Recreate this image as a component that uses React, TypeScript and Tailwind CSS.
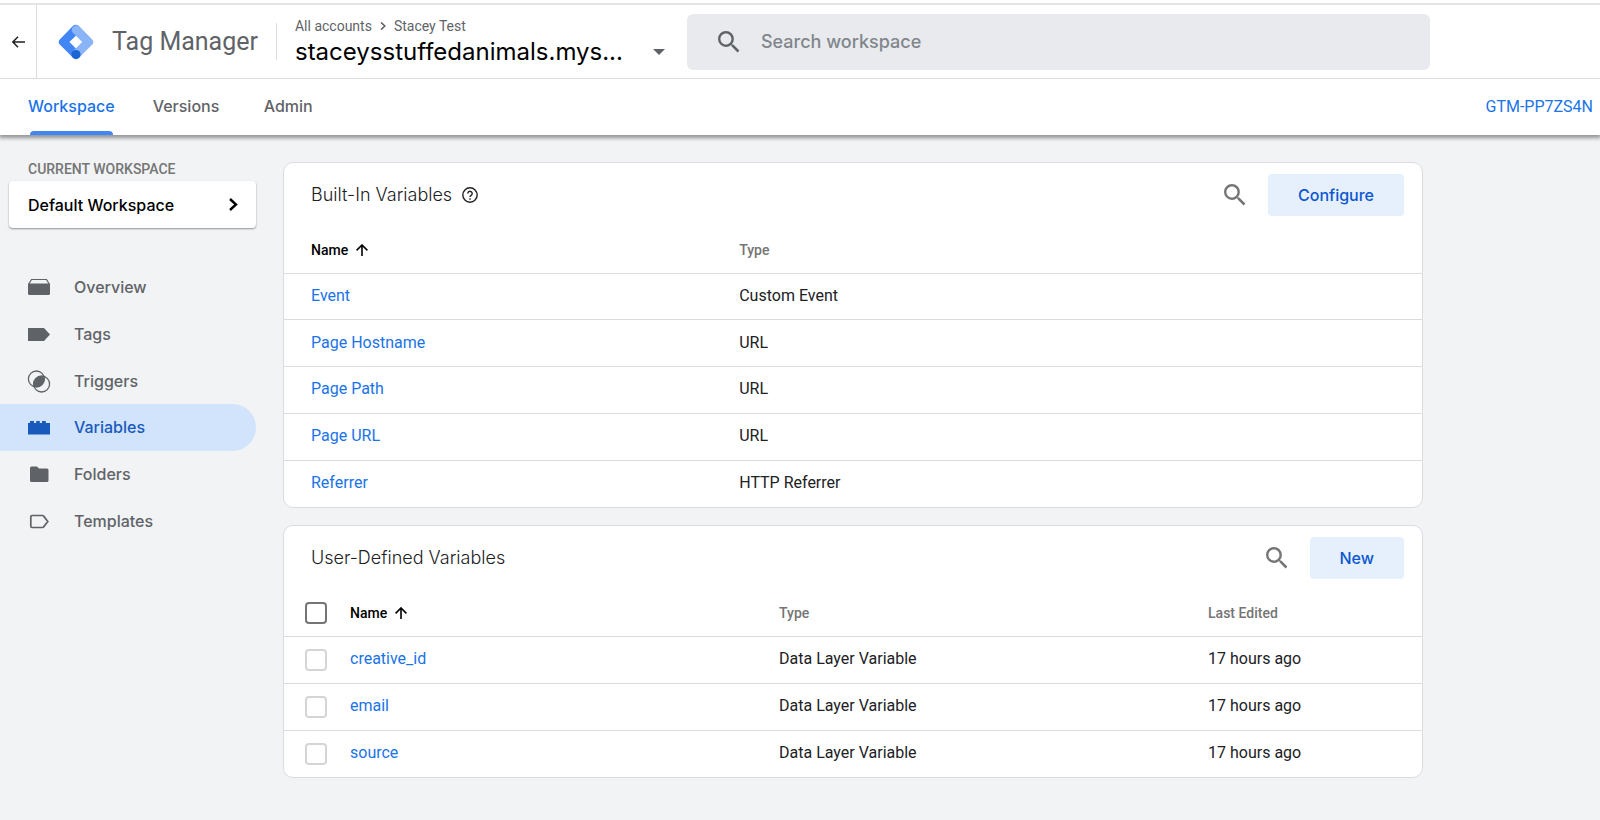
import React, { useState } from 'react';

interface BuiltInVariable {
  name: string;
  type: string;
}

interface UserVariable {
  name: string;
  type: string;
  edited: string;
}

const builtIn: BuiltInVariable[] = [
  { name: 'Event', type: 'Custom Event' },
  { name: 'Page Hostname', type: 'URL' },
  { name: 'Page Path', type: 'URL' },
  { name: 'Page URL', type: 'URL' },
  { name: 'Referrer', type: 'HTTP Referrer' },
];

const userDefined: UserVariable[] = [
  { name: 'creative_id', type: 'Data Layer Variable', edited: '17 hours ago' },
  { name: 'email', type: 'Data Layer Variable', edited: '17 hours ago' },
  { name: 'source', type: 'Data Layer Variable', edited: '17 hours ago' },
];

const tabs = ['Workspace', 'Versions', 'Admin'];

const SearchIcon = ({ className }: { className: string }) => (
  <svg className={className} viewBox="3 3 18 18" fill="currentColor" aria-hidden="true">
    <path d="M15.5 14h-.79l-.28-.27A6.471 6.471 0 0 0 16 9.5 6.5 6.5 0 1 0 9.5 16c1.61 0 3.09-.59 4.23-1.57l.27.28v.79l5 4.99L20.49 19l-4.99-5zm-6 0C7.01 14 5 11.99 5 9.5S7.01 5 9.5 5 14 7.01 14 9.5 11.99 14 9.5 14z" />
  </svg>
);

const SortArrow = () => (
  <svg className="h-3 w-3" viewBox="0 0 12 12" fill="none" stroke="currentColor" strokeWidth="1.6" aria-hidden="true">
    <path d="M6 12V1M0.6 6.4 6 1l5.4 5.4" />
  </svg>
);

const Logo = () => (
  <svg className="h-9 w-9 shrink-0" viewBox="0 0 36 36" aria-hidden="true">
    <path d="M14.6 2.2a4.6 4.6 0 0 1 6.6.1l-.2 6.5-9.6 9.2 9.6 9.4-6.4 5.9L2 20.8a4 4 0 0 1 0-5.6z" fill="#4285f4" />
    <path d="M21.3 2.3 34 15.2a4 4 0 0 1 0 5.6L21.3 33.5l-6.4-6.3 9.3-9.2-9.4-9.3a4.6 4.6 0 0 1 6.5-6.4z" fill="#8ab4f8" />
    <circle cx="18" cy="30.6" r="4.6" fill="#1967d2" />
  </svg>
);

const navItems = [
  {
    label: 'Overview',
    icon: (
      <>
        <path d="M1 5.5h22v10A1.5 1.5 0 0 1 21.5 17h-19A1.5 1.5 0 0 1 1 15.5z" fill="currentColor" />
        <path d="M1.8 6 4.5 1.5h15L22.2 6" fill="none" stroke="currentColor" strokeWidth="1.2" />
      </>
    ),
  },
  {
    label: 'Tags',
    icon: <path d="M1 3h16l6 6.5-6 6.5H1z" fill="currentColor" />,
  },
  {
    label: 'Triggers',
    icon: (
      <>
        <circle cx="9.4" cy="7" r="8" fill="none" stroke="currentColor" strokeWidth="1.3" />
        <circle cx="14.6" cy="12" r="8" fill="none" stroke="currentColor" strokeWidth="1.3" />
        <path d="M17.1 4.5a8 8 0 0 1-10.2 10A8 8 0 0 1 17.1 4.5z" fill="currentColor" />
      </>
    ),
  },
  {
    label: 'Variables',
    icon: <path d="M1 5h2V3h4v2h2.2V3h3.6v2H15V3h3.8v2H23v11.5H1z" fill="currentColor" />,
  },
  {
    label: 'Folders',
    icon: (
      <path d="M4.5 1.5H10l2 2h8A1.5 1.5 0 0 1 21.5 5v10.5A1.5 1.5 0 0 1 20 17H4.5A1.5 1.5 0 0 1 3 15.5V3a1.5 1.5 0 0 1 1.5-1.5z" fill="currentColor" />
    ),
  },
  {
    label: 'Templates',
    icon: (
      <path d="M5 3.5h10.5a1 1 0 0 1 .9.4l4.4 5.6-4.4 5.6a1 1 0 0 1-.9.4H5a1.2 1.2 0 0 1-1.2-1.2V4.700A1.2 1.2 0 0 1 5 3.5z" fill="none" stroke="currentColor" strokeWidth="1.7" />
    ),
  },
];

const headText = 'text-sm font-medium';
const cardStyle = 'overflow-hidden rounded-[10px] border border-[#dadce0] bg-white';
const cardTitle = 'font-[Inter,sans-serif] text-lg font-light text-[#202124]';
const cardButton = 'h-[42px] rounded bg-[#e6f0fd] px-[30px] font-[Inter,sans-serif] text-base font-medium text-[#0b57d0]';
const linkStyle = 'text-[#1a73e8] hover:underline';

export default function App() {
  const [search, setSearch] = useState('');
  const [selected, setSelected] = useState<string[]>([]);

  const allSelected = selected.length === userDefined.length;
  const toggleAll = () => setSelected(allSelected ? [] : userDefined.map((v) => v.name));
  const toggle = (name: string) =>
    setSelected(selected.includes(name) ? selected.filter((n) => n !== name) : [...selected, name]);

  return (
    <div className="min-h-screen bg-[#f1f3f4] pb-8 font-[Roboto,sans-serif] text-base text-[#202124]">
      <header className="relative bg-white pt-[3px] shadow-[0_2px_4px_1px_rgba(0,0,0,0.4)]">
        <div className="flex h-[76px] items-stretch border-t-2 border-b border-t-[#e4e4e4] border-b-[#dadce0]">
          <button aria-label="Back" className="flex w-[37px] shrink-0 items-center justify-center border-r border-[#dadce0]">
            <svg className="h-3 w-[13px]" viewBox="0 0 13 12" fill="none" stroke="#202124" strokeWidth="1.5">
              <path d="M13 6H1M6 .8.9 6 6 11.2" />
            </svg>
          </button>
          <div className="flex items-center gap-[18px] pl-[21px] text-[25px] text-[#5f6368]">
            <Logo />
            <span className="whitespace-nowrap">Tag Manager</span>
          </div>
          <div className="mx-[18px] my-auto h-[37px] w-px shrink-0 bg-[#dadce0]" />
          <div className="flex w-[370px] shrink-0 flex-col pt-[11px]">
            <div className="flex items-center gap-2 text-sm leading-5 text-[#5f6368]">
              <a href="#accounts">All accounts</a>
              <svg className="h-2 w-[6px]" viewBox="0 0 6 8" fill="none" stroke="currentColor" strokeWidth="1.6">
                <path d="m1 .5 3.8 3.5L1 7.5" />
              </svg>
              <a href="#account">Stacey Test</a>
            </div>
            <button className="flex items-center justify-between font-[Inter,sans-serif] text-2xl leading-8 text-black">
              staceysstuffedanimals.mys...
              <svg className="h-[6px] w-3" viewBox="0 0 12 6" fill="#5f6368">
                <path d="M0 0h12L6 6z" />
              </svg>
            </button>
          </div>
          <label className="mt-[9px] mr-6 ml-[22px] flex h-[56px] max-w-[743px] flex-1 items-center gap-[21px] rounded-md bg-[#e8eaed] pl-[31px] text-[#5f6368]">
            <SearchIcon className="h-[22px] w-[22px] shrink-0" />
            <input
              className="w-full bg-transparent font-[Inter,sans-serif] text-lg font-medium text-[#5f6368] outline-none placeholder:text-[#80868b]"
              type="text"
              aria-label="Search workspace"
              placeholder="Search workspace"
              value={search}
              onChange={(e) => setSearch(e.target.value)}
            />
          </label>
        </div>
        <div className="flex h-14 items-stretch justify-between pr-[7px] pl-7">
          <nav className="flex gap-[38px] font-[Inter,sans-serif] font-medium text-[#5f6368]">
            {tabs.map((tab) => (
              <a
                key={tab}
                href={`#${tab}`}
                className={`flex min-w-[73px] flex-col justify-between pt-[15px] ${tab === 'Workspace' ? 'text-[#1a73e8]' : ''}`}
              >
                {tab}
                {tab === 'Workspace' && <span className="mx-[2px] h-1 rounded-t bg-[#4285f4]" />}
              </a>
            ))}
          </nav>
          <a href="#container" className="self-center text-[#1a73e8]">GTM-PP7ZS4N</a>
        </div>
      </header>

      <div className="flex">
        <aside className="w-[283px] shrink-0 pt-6">
          <h2 className="pl-7 text-sm leading-5 font-medium text-[#757575]">CURRENT WORKSPACE</h2>
          <button className="mt-[2px] ml-[9px] flex h-[47px] w-[247px] items-center justify-between rounded bg-white pr-[18px] pl-[19px] font-[Inter,sans-serif] font-medium text-black shadow-[0_1px_2px_rgba(0,0,0,0.4)]">
            Default Workspace
            <svg className="h-[13px] w-[9px]" viewBox="0 0 9 13" fill="none" stroke="currentColor" strokeWidth="2.4">
              <path d="m1 1 6 5.5L1 12" />
            </svg>
          </button>
          <nav className="mt-9 mr-[27px] grid h-[280px] auto-rows-fr font-[Inter,sans-serif] font-medium text-[#5f6368]">
            {navItems.map((item) => (
              <a
                key={item.label}
                href={`#${item.label}`}
                className={`flex items-center gap-[23px] rounded-r-full pl-[27px] ${
                  item.label === 'Variables' ? 'bg-[#d2e3fc] text-[#185abc]' : ''
                }`}
              >
                <svg className="h-6 w-6" viewBox="0 -3 24 24">{item.icon}</svg>
                {item.label}
              </a>
            ))}
          </nav>
        </aside>

        <main className="mr-6 flex max-w-[1140px] flex-1 flex-col gap-[17px] pt-[27px]">
          <section className={cardStyle}>
            <div className="flex h-16 items-center gap-[10px] pr-[18px] pl-[27px]">
              <h2 className={cardTitle}>Built-In Variables</h2>
              <svg className="h-4 w-4" viewBox="0 0 16 16" fill="none" stroke="#202124" strokeWidth="1.4">
                <circle cx="8" cy="8" r="7.2" />
                <path d="M5.8 6.5a2.2 2.2 0 1 1 3.4 1.8C8.4 8.8 8 9.2 8 10" />
                <path d="M8 11.2v1.5" />
              </svg>
              <button aria-label="Search built-in variables" className="mr-3 ml-auto text-[#757575]">
                <SearchIcon className="h-[22px] w-[22px]" />
              </button>
              <button className={cardButton}>Configure</button>
            </div>
            <table className="h-[280px] w-full table-fixed text-left">
              <thead>
                <tr className="h-[46px]">
                  <th className={`${headText} w-[40%] pl-[27px] text-black`}>
                    <span className="flex items-center gap-2">Name <SortArrow /></span>
                  </th>
                  <th className={`${headText} text-[#757575]`}>Type</th>
                </tr>
              </thead>
              <tbody>
                {builtIn.map((v) => (
                  <tr key={v.name} className="h-[46px] border-t border-[#dadce0]">
                    <td className="pb-px pl-[27px]"><a href="#variable" className={linkStyle}>{v.name}</a></td>
                    <td className="pb-px">{v.type}</td>
                  </tr>
                ))}
              </tbody>
            </table>
          </section>

          <section className={cardStyle}>
            <div className="flex h-16 items-center pr-[18px] pl-[27px]">
              <h2 className={cardTitle}>User-Defined Variables</h2>
              <button aria-label="Search user-defined variables" className="mr-[22px] ml-auto text-[#757575]">
                <SearchIcon className="h-[22px] w-[22px]" />
              </button>
              <button className={cardButton}>New</button>
            </div>
            <table className="h-[187px] w-full table-fixed text-left">
              <thead>
                <tr className="h-[46px]">
                  <th className="w-[66px] pl-[21px]">
                    <input
                      type="checkbox"
                      aria-label="Select all variables"
                      className="block h-[22px] w-[22px] appearance-none rounded-sm border-2 border-[#757575] checked:bg-[#1a73e8]"
                      checked={allSelected}
                      onChange={toggleAll}
                    />
                  </th>
                  <th className={`${headText} w-[37.7%] text-black`}>
                    <span className="flex items-center gap-2">Name <SortArrow /></span>
                  </th>
                  <th className={`${headText} w-[37.7%] text-[#757575]`}>Type</th>
                  <th className={`${headText} text-[#757575]`}>Last Edited</th>
                </tr>
              </thead>
              <tbody>
                {userDefined.map((v) => (
                  <tr key={v.name} className="h-[46px] border-t border-[#dadce0]">
                    <td className="pl-[21px]">
                      <input
                        type="checkbox"
                        aria-label={`Select ${v.name}`}
                        className="block h-[22px] w-[22px] appearance-none rounded-sm border-2 border-[#d5d5d5] checked:bg-[#1a73e8]"
                        checked={selected.includes(v.name)}
                        onChange={() => toggle(v.name)}
                      />
                    </td>
                    <td className="pb-px"><a href="#variable" className={linkStyle}>{v.name}</a></td>
                    <td className="pb-px">{v.type}</td>
                    <td className="pb-px">{v.edited}</td>
                  </tr>
                ))}
              </tbody>
            </table>
          </section>
        </main>
      </div>
    </div>
  );
}
